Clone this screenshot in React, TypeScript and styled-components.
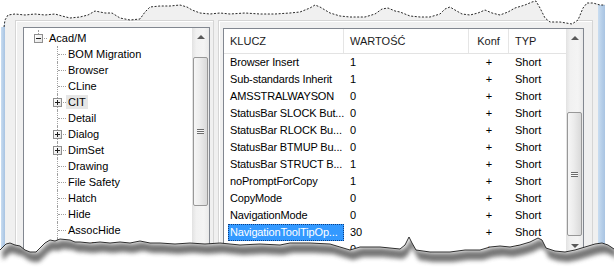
import React from "react";
import styled, { createGlobalStyle } from "styled-components";

const GlobalStyle = createGlobalStyle`
  body {
    margin: 0;
    background: #fff;
  }
`;

const Shot = styled.div`
  position: relative;
  width: 614px;
  height: 269px;
  overflow: hidden;
  background: #fff;
  font-family: "Liberation Sans", Arial, sans-serif;
  font-size: 11px;
  color: #000;
`;

const Window = styled.div`
  display: flex;
  width: 604px;
  height: 100%;
  margin-left: 1px;
`;

const AeroEdge = styled.div<{ $w: number }>`
  width: ${(p) => p.$w}px;
  flex-shrink: 0;
  background: linear-gradient(to right, #c9ddf1, #b4cde8 60%, #a9c4e2);
`;

const Body = styled.div`
  flex: 1;
  display: flex;
  gap: 4px;
  padding: 20px 5px 0 10px;
  background: #f0f0f0;
`;

const Group = styled.div<{ $w: number; $pad: string }>`
  width: ${(p) => p.$w}px;
  flex-shrink: 0;
  box-sizing: border-box;
  padding: ${(p) => p.$pad};
  border: 1px solid #d5d5d5;
  border-bottom: none;
  box-shadow: inset 1px 1px 0 #fff;
`;

const Box = styled.div<{ $w: number; $h: number }>`
  width: ${(p) => p.$w}px;
  height: ${(p) => p.$h}px;
  box-sizing: border-box;
  border: 1px solid #828790;
  background: #fff;
  display: flex;
`;

/* ---------- scrollbar ---------- */

const ScrollBar = styled.div`
  width: 17px;
  flex-shrink: 0;
  display: flex;
  flex-direction: column;
  background: linear-gradient(to right, #e2e2e2, #f1f1f1 25%, #f4f4f4 70%, #e9e9e9);
`;

const ArrowButton = styled.div<{ $down?: boolean }>`
  height: 17px;
  flex-shrink: 0;
  display: flex;
  align-items: center;
  justify-content: center;

  &::before {
    content: "";
    border-left: 4px solid transparent;
    border-right: 4px solid transparent;
    ${(p) => (p.$down ? "border-top" : "border-bottom")}: 4px solid #5a5a5a;
  }
`;

const Track = styled.div`
  flex: 1;
  display: flex;
  flex-direction: column;
`;

const Thumb = styled.div<{ $offset: number; $size: number }>`
  margin: ${(p) => p.$offset}px 1px 0 1px;
  height: ${(p) => p.$size}px;
  box-sizing: border-box;
  border: 1px solid #989898;
  border-radius: 2px;
  background: linear-gradient(to right, #f6f6f6, #ececec 45%, #d9d9d9);
  display: flex;
  align-items: center;
  justify-content: center;
`;

const Grip = styled.div`
  width: 7px;
  height: 5px;
  background: repeating-linear-gradient(to bottom, #6c6c6c 0 1px, #f8f8f8 1px 2px);
`;

const Scroller = ({ offset, size }: { offset: number; size: number }) => (
  <ScrollBar>
    <ArrowButton />
    <Track>
      <Thumb $offset={offset} $size={size}>
        <Grip />
      </Thumb>
    </Track>
    <ArrowButton $down />
  </ScrollBar>
);

/* ---------- tree ---------- */

const TreeArea = styled.div`
  flex: 1;
  padding-top: 2px;
  overflow: hidden;
`;

const TreeRow = styled.div<{ $level: number }>`
  height: 16px;
  display: flex;
  align-items: center;
  padding-left: ${(p) => 10 + p.$level * 19}px;
  white-space: nowrap;
`;

const Connector = styled.div<{ $topOnly?: boolean }>`
  position: relative;
  width: 13px;
  height: 16px;
  flex-shrink: 0;

  &::before {
    content: "";
    position: absolute;
    left: 4px;
    top: 0;
    height: ${(p) => (p.$topOnly ? "4px" : "16px")};
    border-left: 1px dotted #a0a0a0;
  }

  &::after {
    content: "";
    position: absolute;
    left: 5px;
    top: 8px;
    width: 8px;
    border-top: 1px dotted #a0a0a0;
  }
`;

const Expander = styled.div<{ $open?: boolean }>`
  position: absolute;
  left: 0;
  top: 4px;
  width: 9px;
  height: 9px;
  box-sizing: border-box;
  border: 1px solid #8f8f8f;
  background: linear-gradient(to bottom right, #fff, #e4e4e4);
  z-index: 1;

  &::before {
    content: "";
    position: absolute;
    left: 1px;
    top: 3px;
    width: 5px;
    height: 1px;
    background: #1d1d1d;
  }

  &::after {
    content: "";
    display: ${(p) => (p.$open ? "none" : "block")};
    position: absolute;
    left: 3px;
    top: 1px;
    width: 1px;
    height: 5px;
    background: #1d1d1d;
  }
`;

const TreeLabel = styled.span<{ $hot?: boolean }>`
  height: 14px;
  line-height: 14px;
  padding: 0 2px;
  background: ${(p) => (p.$hot ? "#e6e6e6" : "transparent")};
`;

type Node = { label: string; level: number; expander?: "plus" | "minus"; hot?: boolean };

const nodes: Node[] = [
  { label: "Acad/M", level: 0, expander: "minus" },
  { label: "BOM Migration", level: 1 },
  { label: "Browser", level: 1 },
  { label: "CLine", level: 1 },
  { label: "CIT", level: 1, expander: "plus", hot: true },
  { label: "Detail", level: 1 },
  { label: "Dialog", level: 1, expander: "plus" },
  { label: "DimSet", level: 1, expander: "plus" },
  { label: "Drawing", level: 1 },
  { label: "File Safety", level: 1 },
  { label: "Hatch", level: 1 },
  { label: "Hide", level: 1 },
  { label: "AssocHide", level: 1 },
  { label: "Install", level: 1 },
];

/* ---------- list view ---------- */

const ListArea = styled.div`
  flex: 1;
  overflow: hidden;
`;

const columns = "120px 125px 40px 57px";

const HeaderRow = styled.div`
  display: grid;
  grid-template-columns: ${columns};
  height: 24px;
  border-bottom: 1px solid #e3e3e3;
  color: #1b1b1b;
`;

const HeaderCell = styled.div<{ $center?: boolean }>`
  display: flex;
  align-items: center;
  justify-content: ${(p) => (p.$center ? "center" : "flex-start")};
  padding-left: ${(p) => (p.$center ? 0 : 6)}px;
  border-right: 1px solid #e5e5e5;
  white-space: nowrap;

  &:last-child {
    border-right: none;
  }
`;

const DataRow = styled.div`
  display: grid;
  grid-template-columns: ${columns};
  height: 17px;
  line-height: 17px;
  white-space: nowrap;
`;

const KeyCell = styled.div<{ $selected?: boolean }>`
  margin-left: 4px;
  padding-left: 2px;
  box-sizing: border-box;
  letter-spacing: -0.15px;
  ${(p) =>
    p.$selected &&
    `
    background: #3399ff;
    color: #fff;
    outline: 1px dotted #0b3f86;
    outline-offset: -1px;
  `}
`;

const Cell = styled.div<{ $center?: boolean }>`
  padding-left: ${(p) => (p.$center ? 0 : 6)}px;
  text-align: ${(p) => (p.$center ? "center" : "left")};
`;

type Entry = { key: string; value: string; selected?: boolean };

const entries: Entry[] = [
  { key: "Browser Insert", value: "1" },
  { key: "Sub-standards Inherit", value: "1" },
  { key: "AMSSTRALWAYSON", value: "0" },
  { key: "StatusBar SLOCK But...", value: "0" },
  { key: "StatusBar RLOCK Bu...", value: "0" },
  { key: "StatusBar BTMUP Bu...", value: "0" },
  { key: "StatusBar STRUCT B...", value: "1" },
  { key: "noPromptForCopy", value: "1" },
  { key: "CopyMode", value: "0" },
  { key: "NavigationMode", value: "0" },
  { key: "NavigationToolTipOp...", value: "30", selected: true },
  { key: "InsertAsStdPatchAV", value: "0" },
];

/* ---------- torn paper edges ---------- */

const Torn = styled.svg`
  position: absolute;
  inset: 0;
  pointer-events: none;
`;

type Pt = [number, number];

const topEdge: Pt[] = [
  [4, 27], [5, 20], [8, 15], [15, 14], [25, 15], [35, 14], [45, 15], [55, 14], [62, 16],
  [70, 18], [80, 17], [88, 15], [95, 11], [100, 12], [105, 13], [112, 13], [120, 18],
  [130, 20], [140, 19], [145, 12], [150, 7], [160, 6], [170, 6], [180, 5], [187, 7],
  [192, 10], [200, 13], [210, 14], [220, 13], [230, 14], [245, 13], [260, 14], [275, 14],
  [290, 13], [300, 12], [310, 8], [315, 5], [320, 7], [330, 13], [340, 16], [350, 17],
  [365, 17], [375, 14], [382, 9], [388, 8], [395, 11], [400, 12], [410, 16], [420, 17],
  [430, 17], [440, 14], [445, 9], [450, 7], [455, 10], [462, 14], [470, 15], [478, 13],
  [485, 10], [492, 13], [500, 15], [508, 12], [515, 8], [525, 5], [532, 2], [536, 1],
  [540, 8], [545, 18], [550, 22], [560, 22], [572, 24], [578, 20], [583, 8], [587, 3],
  [593, 3], [600, 5], [605, 5],
];

const bottomEdge: Pt[] = [
  [0, 250], [3, 247], [6, 244], [10, 243], [15, 245], [20, 246], [25, 250], [30, 252],
  [36, 252], [40, 248], [45, 243], [50, 240], [55, 241], [60, 239], [70, 240], [75, 242],
  [80, 242], [90, 243], [100, 242], [110, 243], [120, 242], [130, 243], [140, 241],
  [150, 243], [160, 243], [175, 244], [190, 243], [205, 244], [220, 243], [240, 245],
  [260, 244], [280, 245], [290, 243], [310, 243], [330, 244], [340, 247], [350, 250],
  [360, 247], [380, 247], [400, 249], [405, 245], [409, 237], [412, 243], [416, 250],
  [430, 252], [450, 252], [465, 250], [480, 250], [490, 247], [500, 246], [510, 247],
  [520, 245], [530, 242], [538, 238], [542, 240], [546, 248], [555, 251], [565, 252],
  [575, 250], [585, 247], [595, 244], [602, 243], [608, 245], [614, 249],
];

const pts = (list: Pt[]) => list.map((p) => p.join(",")).join(" ");

const shifted = (list: Pt[], dx: number, dy: number) =>
  list.map(([x, y]) => [x + dx, y + dy] as Pt);

const TornEdges = () => (
  <Torn width={614} height={269} viewBox="0 0 614 269">
    <defs>
      <filter id="soft" x="-5%" y="-50%" width="110%" height="200%">
        <feGaussianBlur stdDeviation="2.2" />
      </filter>
      <clipPath id="below">
        <polygon points={`${pts(bottomEdge)} 614,269 0,269`} />
      </clipPath>
    </defs>
    <polygon points={`0,0 0,27 ${pts(topEdge)} 614,5 614,0`} fill="#fff" />
    <rect x={605} y={0} width={9} height={269} fill="#fff" />
    <polyline
      points={pts(topEdge)}
      fill="none"
      stroke="#111"
      strokeWidth={0.9}
      strokeDasharray="2 1.6"
    />
    <polygon points={`${pts(bottomEdge)} 614,269 0,269`} fill="#fff" />
    <g clipPath="url(#below)">
      <polygon
        points={`${pts(shifted(bottomEdge, 2, 1))} ${pts(shifted(bottomEdge, 3, 10).reverse())}`}
        fill="#5e5e5e"
        opacity={0.85}
        filter="url(#soft)"
      />
    </g>
    <polyline points={pts(bottomEdge)} fill="none" stroke="#1a1a1a" strokeWidth={0.9} />
  </Torn>
);

export default function App() {
  return (
    <Shot>
      <GlobalStyle />
      <Window>
        <AeroEdge $w={4} />
        <Body>
          <Group $w={199} $pad="6px 3px 0 7px">
            <Box $w={187} $h={228}>
              <TreeArea>
                {nodes.map((n) => (
                  <TreeRow key={n.label} $level={n.level}>
                    <Connector $topOnly={n.level === 0}>
                      {n.expander && <Expander $open={n.expander === "minus"} />}
                    </Connector>
                    <TreeLabel $hot={n.hot}>{n.label}</TreeLabel>
                  </TreeRow>
                ))}
              </TreeArea>
              <Scroller offset={12} size={149} />
            </Box>
          </Group>
          <Group $w={375} $pad="7px 8px 0 4px">
            <Box $w={361} $h={227}>
              <ListArea>
                <HeaderRow>
                  <HeaderCell>KLUCZ</HeaderCell>
                  <HeaderCell>WARTOŚĆ</HeaderCell>
                  <HeaderCell $center>Konf</HeaderCell>
                  <HeaderCell>TYP</HeaderCell>
                </HeaderRow>
                {entries.map((e) => (
                  <DataRow key={e.key}>
                    <KeyCell $selected={e.selected}>{e.key}</KeyCell>
                    <Cell>{e.value}</Cell>
                    <Cell $center>+</Cell>
                    <Cell>Short</Cell>
                  </DataRow>
                ))}
              </ListArea>
              <Scroller offset={66} size={124} />
            </Box>
          </Group>
        </Body>
        <AeroEdge $w={7} />
      </Window>
      <TornEdges />
    </Shot>
  );
}
